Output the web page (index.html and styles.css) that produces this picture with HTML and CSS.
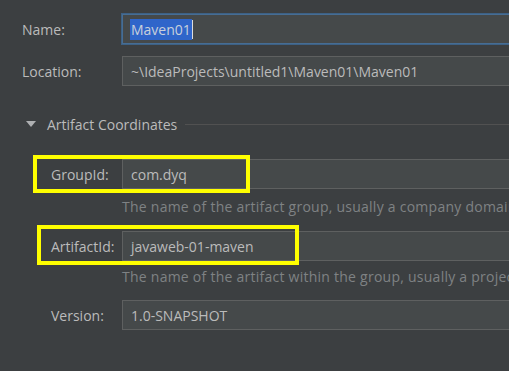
FILE: index.html
```html
<!DOCTYPE html>
<html lang="en">
<head>
    <meta charset="UTF-8">
    <meta name="viewport" content="width=device-width, initial-scale=1.0">
    <title>New Project</title>
    <link rel="stylesheet" href="styles.css">
</head>
<body>
    <div class="pg">
    <div class="rw top">
        <label class="lb">Name:</label>
        <div class="fd fc"><span class="sel">Maven01</span><span class="cr"></span></div>
    </div>
    <div class="rw top loc">
        <label class="lb">Location:</label>
        <div class="fd">~\IdeaProjects\untitled1\Maven01\Maven01</div>
    </div>
    <div class="hd">
        <span class="tr"></span>
        <span class="ht">Artifact Coordinates</span>
        <span class="ln"></span>
    </div>
    <div class="rw sub gid">
        <label class="lb">GroupId:</label>
        <div class="fd">com.dyq</div>
    </div>
    <div class="hp h1">The name of the artifact group, usually a company domain</div>
    <div class="rw sub aid">
        <label class="lb">ArtifactId:</label>
        <div class="fd">javaweb-01-maven</div>
    </div>
    <div class="hp h2">The name of the artifact within the group, usually a project name</div>
    <div class="rw sub ver">
        <label class="lb">Version:</label>
        <div class="fd">1.0-SNAPSHOT</div>
    </div>
    </div>
    <div class="mk m1"></div>
    <div class="mk m2"></div>
</body>
</html>
```

FILE: styles.css
```css
body {
    background-color: #3c3f41;
    color: #bbbbbb;
    margin: 0;
    width: 509px;
    height: 371px;
    overflow: hidden;
    position: relative;
    font-family: "Open Sans", "Noto Sans", sans-serif;
    font-size: 14px;
}
.pg {
    padding-top: 14px;
}
.rw {
    display: flex;
    align-items: center;
    height: 30px;
}
.rw.top {
    padding-left: 22px;
}
.rw.top .lb {
    width: 100px;
}
.rw.sub {
    padding-left: 51px;
}
.rw.sub .lb {
    width: 71px;
}
.lb {
    flex: none;
    color: #bbbbbb;
}
.fd {
    flex: none;
    box-sizing: border-box;
    width: 500px;
    height: 30px;
    background-color: #45494a;
    border: 1px solid #5e6060;
    padding: 0 8px;
    display: flex;
    align-items: center;
    white-space: nowrap;
}
.fd.fc {
    border-color: #466d94;
    box-shadow: 0 0 0 1px #3d6185;
    padding-left: 7px;
}
.sel {
    background-color: #2f65ca;
    color: #c8d0dc;
    line-height: 21px;
    padding: 0 1px;
}
.cr {
    width: 1px;
    height: 19px;
    background-color: #dddddd;
}
.loc {
    margin-top: 12px;
}
.hd {
    display: flex;
    align-items: center;
    height: 20px;
    margin-top: 28px;
    padding-left: 26px;
}
.tr {
    width: 0;
    height: 0;
    border-left: 5px solid transparent;
    border-right: 5px solid transparent;
    border-top: 6px solid #aeb0b2;
    margin-right: 11px;
}
.ht {
    white-space: nowrap;
}
.ln {
    flex: 1;
    height: 1px;
    background-color: #515151;
    margin-left: 8px;
}
.gid {
    margin-top: 25px;
}
.hp {
    padding-left: 122px;
    color: #7f8284;
    height: 18px;
    line-height: 18px;
    letter-spacing: 0.25px;
    white-space: nowrap;
    overflow: hidden;
}
.h1 {
    margin-top: 9px;
}
.aid {
    margin-top: 15px;
}
.h2 {
    margin-top: 7px;
}
.ver {
    margin-top: 14px;
}
.mk {
    position: absolute;
    box-sizing: border-box;
    border: 4px solid #ffff00;
}
.m1 {
    left: 33px;
    top: 155px;
    width: 217px;
    height: 38px;
}
.m2 {
    left: 37px;
    top: 225px;
    width: 262px;
    height: 40px;
}
```
